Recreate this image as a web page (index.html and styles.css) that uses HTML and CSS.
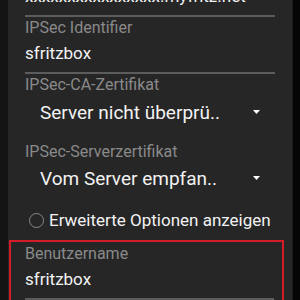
FILE: index.html
```html
<!DOCTYPE html>
<html lang="de">
<head>
<meta charset="utf-8">
<link rel="stylesheet" href="styles.css">
</head>
<body>
<div class="screen">
  <div class="edge-left"></div>
  <div class="dialog">
    <div class="field field-top">
      <div class="value">xxxxxxxxxxxxxxxx.myfritz.net</div>
      <div class="line"></div>
    </div>
    <div class="field">
      <div class="label">IPSec Identifier</div>
      <div class="value">sfritzbox</div>
      <div class="line"></div>
    </div>
    <div class="label label-ca">IPSec-CA-Zertifikat</div>
    <div class="spinner spinner-ca">
      <span class="spinner-text">Server nicht überprü..</span>
      <svg class="arrow" width="7" height="4" viewBox="0 0 7 4"><path d="M0 0H7L3.5 4Z" fill="#ffffff"/></svg>
    </div>
    <div class="label label-server">IPSec-Serverzertifikat</div>
    <div class="spinner spinner-server">
      <span class="spinner-text">Vom Server empfan..</span>
      <svg class="arrow" width="7" height="4" viewBox="0 0 7 4"><path d="M0 0H7L3.5 4Z" fill="#ffffff"/></svg>
    </div>
    <div class="radio">
      <span class="circle"></span>
      <span class="radio-text">Erweiterte Optionen anzeigen</span>
    </div>
    <div class="highlight">
      <div class="field">
        <div class="label">Benutzername</div>
        <div class="value">sfritzbox</div>
        <div class="line"></div>
      </div>
    </div>
  </div>
  <div class="edge-right"></div>
</div>
</body>
</html>
```

FILE: styles.css
```css
html, body {
  margin: 0;
  padding: 0;
  background: #000;
}
body {
  font-family: Roboto, "Noto Sans", sans-serif;
  width: 300px;
  height: 300px;
  overflow: hidden;
}
.screen {
  display: flex;
  width: 300px;
  height: 300px;
  overflow: hidden;
}
.edge-left {
  width: 8px;
  flex: none;
  background: #141414;
}
.edge-right {
  width: 8px;
  flex: none;
  background: #050505;
  border-left: 1px solid #1a1a1a;
  box-sizing: border-box;
}
.dialog {
  width: 284px;
  flex: none;
  background: #262626;
  display: flex;
  flex-direction: column;
  padding: 0 17px;
  box-sizing: border-box;
}
.field {
  display: flex;
  flex-direction: column;
}
.field-top .value {
  margin-top: -16px;
}
.field-top .line {
  margin-top: 7px;
}
.label {
  font-size: 16px;
  line-height: 20px;
  height: 20px;
  color: #8a8a8a;
  margin-top: 1px;
  white-space: nowrap;
}
.value {
  font-size: 17px;
  line-height: 24px;
  height: 24px;
  color: #f2f2f2;
  margin-top: 3px;
  white-space: nowrap;
}
.line {
  height: 2px;
  background: #5c5c5c;
  margin-top: 7px;
}
.spinner {
  display: flex;
  align-items: center;
  justify-content: space-between;
  padding: 0 15px;
  height: 26px;
}
.spinner-ca {
  margin-top: 5px;
}
.spinner-server {
  margin-top: 4px;
}
.label-server {
  margin-top: 16px;
}
.spinner-text {
  font-size: 19px;
  line-height: 26px;
  color: #f2f2f2;
  white-space: nowrap;
}
.arrow {
  display: block;
  margin-top: -3px;
}
.radio {
  display: flex;
  align-items: center;
  gap: 5px;
  height: 24px;
  margin-top: 16px;
  padding-left: 4px;
}
.circle {
  width: 15px;
  height: 15px;
  border: 1.5px solid #8a8a8a;
  border-radius: 50%;
  box-sizing: border-box;
  flex: none;
}
.radio-text {
  font-size: 17px;
  line-height: 24px;
  color: #f2f2f2;
  white-space: nowrap;
}
.highlight {
  margin: 8px -9px 0 -16px;
  border: 2px solid #d41c28;
  padding: 0 8px 0 14px;
}
.highlight .field .label {
  margin-top: 2px;
}
```
